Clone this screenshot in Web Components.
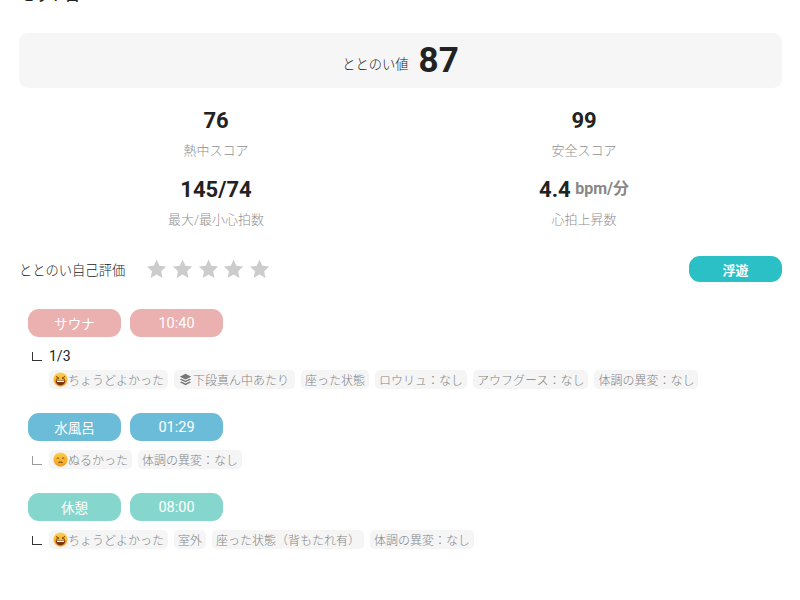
<!DOCTYPE html>
<html lang="ja"><head><meta charset="utf-8">
<style>
html,body{margin:0;padding:0;background:#fff;overflow:hidden;height:600px}
body{font-family:Roboto,"Noto Sans CJK JP",sans-serif;color:#222}
</style></head><body>
<page-root></page-root>
<template id="ic-smile"><svg width="15" height="15" viewBox="0 0 16 16"><defs><linearGradient id="g1" x1="0" y1="0" x2="0" y2="1"><stop offset="0" stop-color="#fdd04a"/><stop offset="1" stop-color="#f5a020"/></linearGradient></defs><circle cx="8" cy="8" r="7.6" fill="url(#g1)"/><path d="M3.200 4.800l3.200 1.700-3.200 1.500M12.800 4.800l-3.200 1.700 3.200 1.500" fill="none" stroke="#6a3d10" stroke-width="1"/><path d="M2.800 8.800h10.400c0 3.400-2.400 5.400-5.200 5.400s-5.200-2-5.200-5.400z" fill="#7a3510"/><path d="M4 9.400h8l-.5 1.300h-7z" fill="#fff"/></svg></template>
<template id="ic-luke"><svg width="15" height="15" viewBox="0 0 16 16"><defs><linearGradient id="g2" x1="0" y1="0" x2="0" y2="1"><stop offset="0" stop-color="#fdd04a"/><stop offset="1" stop-color="#f39a1c"/></linearGradient></defs><circle cx="8" cy="8" r="7.6" fill="url(#g2)"/><path d="M4 7c.7-.8 1.800-.8 2.500 0M9.500 7c.7-.8 1.800-.8 2.500 0" fill="none" stroke="#6a3d10" stroke-width="1"/><path d="M5.800 11.300c1.400-.8 3-.8 4.400 0" stroke="#6a3d10" stroke-width="1.100" fill="none"/></svg></template>
<template id="ic-layers"><svg width="13" height="13" viewBox="0 0 16 16"><path d="M8 1l7 3.500-7 3.500-7-3.500z" fill="#777"/><path d="M1 8l2-1 5 2.500 5-2.500 2 1-7 3.500z" fill="#777"/><path d="M1 11.500l2-1 5 2.500 5-2.500 2 1-7 3.500z" fill="#777"/></svg></template>
<script>
function def(name, css, html){
  customElements.define(name, class extends HTMLElement{
    connectedCallback(){
      if(this.shadowRoot) return;
      const r=this.attachShadow({mode:'open'});
      r.innerHTML='<style>'+css+'</style>'+(typeof html==='function'?html(this):html);
    }
  });
}
def('score-panel',`:host{display:flex;align-items:center;justify-content:center;height:55px;background:#f6f6f6;border-radius:9px;gap:10px}
 .l{font-size:13.300px;color:#222;margin-top:6px;font-weight:300}.v{font-size:35px;font-weight:700;color:#222;line-height:40px}`,
 a=>`<span class="l">${a.getAttribute('label')}</span><span class="v">${a.getAttribute('value')}</span>`);
def('stat-cell',`:host{display:flex;flex-direction:column;align-items:center}
 .v{font-size:22px;font-weight:700;color:#222;line-height:24px;height:24px;white-space:nowrap}
 .u{font-size:16px;color:#888;position:relative;top:-3px;margin-left:-1px}
 .l{font-size:13px;color:#909090;line-height:18px;margin-top:9px;font-weight:300}`,
 a=>`<div class="v">${a.getAttribute('value')}${a.hasAttribute('unit')?` <span class="u">${a.getAttribute('unit')}</span>`:''}</div><div class="l">${a.getAttribute('label')}</div>`);
def('stat-grid',`:host{display:grid;grid-template-columns:368px 368px;row-gap:18px;margin:21px 0 0 13px}`,`<slot></slot>`);
def('star-rating',`:host{display:flex;margin-left:-1px}svg{display:block}`,
 ()=>Array(5).fill('<svg width="25.750" height="24" viewBox="0 0 25 24"><path d="M12.200 2.500l2.800 6.300 6.800.8-5 4.600 1.300 6.800-5.900-3.500-5.900 3.500 1.300-6.800-5-4.600 6.800-.8z" fill="#ccc"/></svg>').join(''));
def('rating-row',`:host{display:flex;align-items:center;height:26px;margin-top:27px}
 .t{font-size:13.300px;color:#222;width:126px;font-weight:300;white-space:nowrap}
 .b{margin-left:auto;width:93px;height:26px;border-radius:11px;background:#2bbfc6;color:#fff;font-size:13px;font-weight:700;display:flex;align-items:center;justify-content:center}`,
 a=>`<span class="t">${a.getAttribute('label')}</span><star-rating></star-rating><span class="b">${a.getAttribute('action')}</span>`);
def('time-pill',`:host{display:flex;align-items:center;justify-content:center;width:93px;height:28px;border-radius:11px;color:#fff;font-size:var(--f,13.500px);background:var(--c)}`,`<slot></slot>`);
def('info-chip',`:host{display:inline-flex;align-items:center;height:19px;padding:0 4px;background:#f5f5f5;border-radius:5px;font-size:12px;color:#828282;white-space:nowrap;font-weight:300}`,`<slot></slot>`);
def('bath-step',`:host{display:block;margin:0 0 0 9px}
 .p{display:flex;gap:9px}`,
 a=>`<div class="p"><time-pill style="--c:${a.getAttribute('color')}">${a.getAttribute('name')}</time-pill><time-pill style="--c:${a.getAttribute('color')};--f:14.500px">${a.getAttribute('time')}</time-pill></div>
 <slot></slot>`);
def('step-detail',`:host{display:block;margin-top:9px}`,`<slot></slot>`);
def('step-line',`:host{display:flex;align-items:center;height:19px;margin-left:4px;font-size:14px;color:#222}
 .m{flex:none;width:10px;height:9px;border-left:1px solid var(--k,#333);border-bottom:1px solid var(--k,#333);box-sizing:border-box;margin-right:7px;margin-top:2px}
 .x{display:flex;gap:6px;align-items:center}`,
 ()=>`<span class="m"></span><span class="x"><slot></slot></span>`);
def('chip-row',`:host{display:flex;gap:6px;margin-left:21px;margin-top:5px}`,`<slot></slot>`);
def('clipped-title',`:host{display:block;height:3px;overflow:hidden;margin-left:1px}
 span{display:block;margin-top:-13px;font-size:15px;font-weight:500;line-height:16px;color:#222}`,a=>`<span>${a.getAttribute('text')}</span>`);
const ic=id=>document.getElementById(id).innerHTML;
def('page-root',`:host{display:block;padding:0 18px 0 19px}
 score-panel{margin-top:30px}
 .steps{display:flex;flex-direction:column;margin-top:27px}
 bath-step+bath-step{margin-top:24px}
 .ly{margin-left:1px;margin-right:1px;display:block}
 info-chip svg{display:block}`,
 ()=>`<clipped-title text="セット目"></clipped-title>
 <score-panel label="ととのい値" value="87"></score-panel>
 <stat-grid>
  <stat-cell value="76" label="熱中スコア"></stat-cell>
  <stat-cell value="99" label="安全スコア"></stat-cell>
  <stat-cell value="145/74" label="最大/最小心拍数"></stat-cell>
  <stat-cell value="4.4" unit="bpm/分" label="心拍上昇数"></stat-cell>
 </stat-grid>
 <rating-row label="ととのい自己評価" action="浮遊"></rating-row>
 <div class="steps">
 <bath-step color="#ebb0b0" name="サウナ" time="10:40">
  <step-detail><step-line>1/3</step-line>
   <chip-row><info-chip>${ic('ic-smile')}ちょうどよかった</info-chip><info-chip style="padding-right:6px"><span class="ly">${ic('ic-layers')}</span>下段真ん中あたり</info-chip><info-chip>座った状態</info-chip><info-chip>ロウリュ：なし</info-chip><info-chip>アウフグース：なし</info-chip><info-chip>体調の異変：なし</info-chip></chip-row>
  </step-detail>
 </bath-step>
 <bath-step color="#6bbcd9" name="水風呂" time="01:29">
  <step-detail><step-line style="--k:#999"><info-chip>${ic('ic-luke')}ぬるかった</info-chip><info-chip>体調の異変：なし</info-chip></step-line></step-detail>
 </bath-step>
 <bath-step color="#85d6cc" name="休憩" time="08:00">
  <step-detail><step-line><info-chip>${ic('ic-smile')}ちょうどよかった</info-chip><info-chip>室外</info-chip><info-chip>座った状態（背もたれ有）</info-chip><info-chip>体調の異変：なし</info-chip></step-line></step-detail>
 </bath-step>
 </div>`);
</script>
</body></html>
